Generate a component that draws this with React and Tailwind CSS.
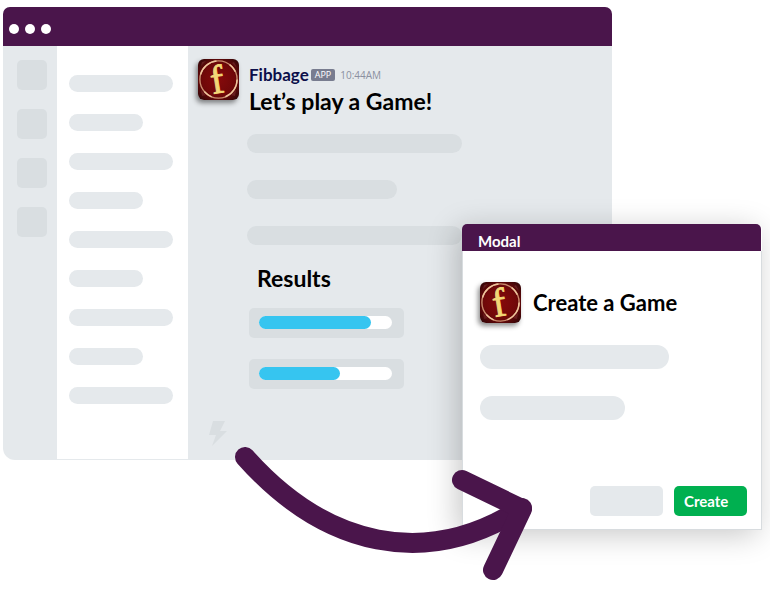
import React from 'react';

function GameIcon({ id }) {
  return (
    <svg
      viewBox="0 0 41 41"
      className="h-[41px] w-[41px] shrink-0 overflow-visible rounded-[6px] shadow-[-2px_3px_5px_rgba(0,0,0,0.45)]"
      role="img"
      aria-label="Fibbage"
    >
      <defs>
        <radialGradient id={id} cx="50%" cy="50%" r="68%">
          <stop offset="0%" stopColor="#860a0b" />
          <stop offset="58%" stopColor="#700809" />
          <stop offset="100%" stopColor="#2c0608" />
        </radialGradient>
      </defs>
      <rect width="41" height="41" rx="6" fill={`url(#${id})`} />
      <path d="M4 3l4-1-5 5zM36 3l3 6-5-5zM4 37l4-1-5-5zM37 37l-4-1 5-5z" fill="#7d3435" opacity="0.5" />
      <circle cx="20.5" cy="20.5" r="18.6" fill="none" stroke="#c98a6c" strokeWidth="1.4" />
      <circle cx="20.5" cy="20.5" r="18.6" fill="none" stroke="#efc49c" strokeWidth="1.4" strokeDasharray="22 14 9 18" />
      <text
        x="19"
        y="34"
        textAnchor="middle"
        transform="rotate(-9 20.5 20.5)"
        className="font-['Liberation_Serif',serif] text-[40px]"
        fill="#f3d777"
        stroke="#f3d777"
        strokeWidth="0.9"
      >
        f
      </text>
    </svg>
  );
}

function Meter({ label, value, fill }) {
  return (
    <div className="h-[30px] w-[155px] rounded-[5px] bg-[#d9dee1] px-[10px] py-2">
      <div
        role="progressbar"
        aria-label={label}
        aria-valuenow={value}
        aria-valuemin={0}
        aria-valuemax={100}
        className="h-[13px] w-[133px] rounded-full bg-white"
      >
        <div className={`h-full rounded-full bg-[#36c5f0] ${fill}`} />
      </div>
    </div>
  );
}

const workspaces = [1, 2, 3, 4];
const channels = [true, false, true, false, true, false, true, false, true];

function AppWindow() {
  return (
    <div className="overflow-hidden rounded-t-[7px] rounded-b-[12px] bg-[#e5e9ec]">
      <header className="flex h-[39px] items-center gap-[6px] bg-[#4a154b] px-[6px] pt-1">
        <span className="h-[10px] w-[10px] rounded-full bg-white" />
        <span className="h-[10px] w-[10px] rounded-full bg-white" />
        <span className="h-[10px] w-[10px] rounded-full bg-white" />
      </header>
      <div className="flex">
        <nav className="flex w-[54px] shrink-0 flex-col items-center gap-[19px] pt-[14px] pl-[4px]">
          {workspaces.map((n) => (
            <span key={n} className="h-[30px] w-[30px] rounded-[5px] bg-[#d9dee1]" />
          ))}
        </nav>
        <aside className="mb-px flex w-[131px] shrink-0 flex-col gap-[22px] bg-white px-3 pt-[29px] pb-[55px]">
          {channels.map((long, i) => (
            <span key={i} className={`h-[17px] rounded-full bg-[#e5e9ec] ${long ? 'w-[104px]' : 'w-[74px]'}`} />
          ))}
        </aside>
        <main className="min-w-0 flex-1 px-[10px] pt-[13px]">
          <div className="flex gap-[10px]">
            <GameIcon id="window-icon" />
            <div className="pt-[6px]">
              <div className="flex h-5 items-center gap-[2px]">
                <span className="text-[17px] leading-5 font-bold text-[#0c0f4a]">Fibbage</span>
                <span className="rounded-[2px] bg-[#787c8f] px-1 font-['Open_Sans',sans-serif] text-[9px] leading-3 text-white">
                  APP
                </span>
                <span className="pl-[3px] font-['Open_Sans',sans-serif] text-[10px] leading-5 text-[#8b90a0]">
                  10:44AM
                </span>
              </div>
              <h1 className="text-[23px] leading-8 font-bold text-black">Let’s play a Game!</h1>
            </div>
          </div>
          <div className="flex flex-col gap-[27px] pt-[17px] pl-[49px]">
            <span className="h-[19px] w-[215px] rounded-full bg-[#d9dee1]" />
            <span className="h-[19px] w-[150px] rounded-full bg-[#d9dee1]" />
            <span className="h-[19px] w-[215px] rounded-full bg-[#d9dee1]" />
          </div>
          <section className="pt-[17px] pl-[51px]">
            <h2 className="pl-2 text-[23px] leading-8 font-bold text-black">Results</h2>
            <div className="flex flex-col gap-[21px] pt-[14px]">
              <Meter label="First result" value={84} fill="w-[112px]" />
              <Meter label="Second result" value={61} fill="w-[81px]" />
            </div>
          </section>
          <svg viewBox="0 0 18 25" className="mt-8 ml-[11px] h-[25px] w-[18px]" aria-hidden="true">
            <path d="M4 0H16L11 10H18L3 25L7 14H0Z" fill="#d9dee1" />
          </svg>
        </main>
      </div>
    </div>
  );
}

function Modal() {
  return (
    <div
      role="dialog"
      aria-labelledby="modal-title"
      className="absolute top-[224px] right-[8px] w-[300px] rounded-t-[5px] bg-white shadow-[-5px_5px_30px_rgba(0,0,0,0.22)]"
    >
      <div className="mr-px h-[27px] rounded-t-[5px] bg-[#4a154b] px-4 pt-[7px] text-[15px] leading-5 font-bold text-white">
        Modal
      </div>
      <div className="border border-t-0 border-[#d8dcdf] pt-[31px] pr-[14px] pb-[13px] pl-[17px]">
        <div className="flex items-center gap-3">
          <GameIcon id="modal-icon" />
          <h2 id="modal-title" className="text-[22px] leading-8 font-bold text-black">
            Create a Game
          </h2>
        </div>
        <div className="flex flex-col gap-[27px] pt-[22px]">
          <span className="h-6 w-[189px] rounded-full bg-[#e5e9ec]" />
          <span className="h-6 w-[145px] rounded-full bg-[#e5e9ec]" />
        </div>
        <div className="flex justify-end gap-[11px] pt-[66px]">
          <button type="button" aria-label="Cancel" className="h-[30px] w-[73px] rounded-[5px] bg-[#e5e9ec]" />
          <button
            type="button"
            className="h-[30px] w-[73px] rounded-[5px] bg-[#00b050] px-[10px] text-left text-[15px] leading-5 font-bold text-white"
          >
            Create
          </button>
        </div>
      </div>
    </div>
  );
}

export default function App() {
  return (
    <div className="relative min-h-screen overflow-hidden bg-white pt-[7px] pr-[158px] pl-[3px] font-['Lato','Open_Sans',sans-serif]">
      <AppWindow />
      <Modal />
      <svg
        viewBox="0 0 300 140"
        className="pointer-events-none absolute top-[445px] right-[237px] h-[140px] w-[300px]"
        fill="none"
        stroke="#4a154b"
        strokeWidth="20"
        strokeLinecap="round"
        strokeLinejoin="round"
        aria-hidden="true"
      >
        <path d="M12 12C92 102 193 125 289 63" />
        <path d="M229 35L289 64L260 125" />
      </svg>
    </div>
  );
}
